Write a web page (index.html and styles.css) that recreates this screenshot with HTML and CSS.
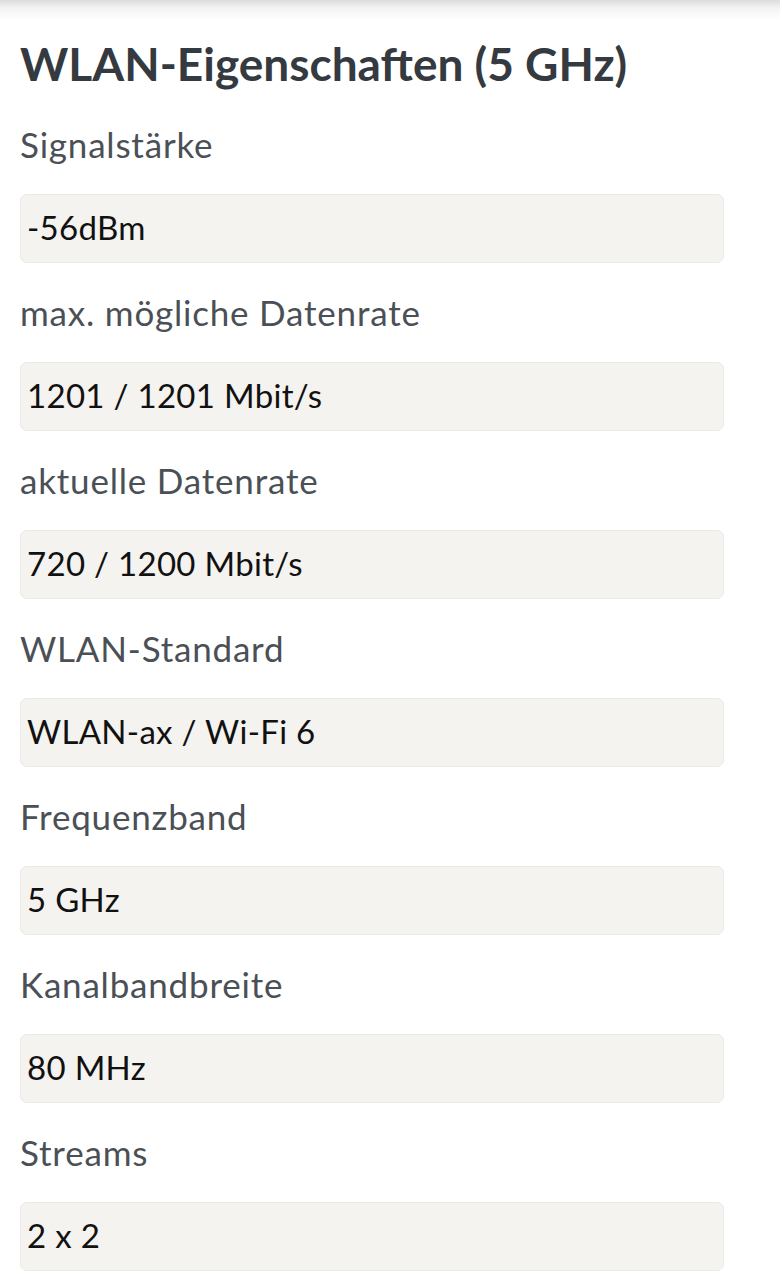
FILE: index.html
```html
<!DOCTYPE html>
<html>

	<head>
		<meta charset="UTF-8">
		<title>WLAN-Eigenschaften</title>
		<link rel="stylesheet" href="styles.css">
	</head>

	<body>
		<div class="topbar"></div>
		<div class="content">
			<h1 class="title">WLAN-Eigenschaften (5 GHz)</h1>
			<div class="field">
				<div class="label">Signalstärke</div>
				<div class="value">-56dBm</div>
			</div>
			<div class="field">
				<div class="label">max. mögliche Datenrate</div>
				<div class="value">1201 / 1201 Mbit/s</div>
			</div>
			<div class="field">
				<div class="label">aktuelle Datenrate</div>
				<div class="value">720 / 1200 Mbit/s</div>
			</div>
			<div class="field">
				<div class="label">WLAN-Standard</div>
				<div class="value">WLAN-ax / Wi-Fi 6</div>
			</div>
			<div class="field">
				<div class="label">Frequenzband</div>
				<div class="value">5 GHz</div>
			</div>
			<div class="field">
				<div class="label">Kanalbandbreite</div>
				<div class="value">80 MHz</div>
			</div>
			<div class="field">
				<div class="label">Streams</div>
				<div class="value">2 x 2</div>
			</div>
		</div>
	</body>

</html>
```

FILE: styles.css
```css
* {
	margin: 0;
	padding: 0;
	box-sizing: border-box;
}

body {
	background-color: #fff;
	font-family: Lato, "Liberation Sans", sans-serif;
	overflow: hidden;
}

/* Schatten der Kopfleiste oben */
.topbar {
	height: 20px;
	background: linear-gradient(#dcdcdc, #f3f3f3 40%, #fff);
}

.content {
	padding: 0 56px 0 20px;
}

.title {
	margin-top: 16px;
	font-size: 46px;
	line-height: 56px;
	font-weight: 700;
	color: #343a40;
	white-space: nowrap;
}

.field {
	padding-top: 28px;
}

.field + .field {
	padding-top: 25px;
}

.label {
	font-size: 35px;
	line-height: 48px;
	letter-spacing: 0.8px;
	color: #4a5056;
}

.value {
	margin-top: 26px;
	height: 69px;
	padding: 0 6px 4px;
	display: flex;
	align-items: center;
	background-color: #f4f3f0;
	border: 1px solid #ebeae6;
	border-radius: 7px;
	font-size: 33px;
	letter-spacing: 0.3px;
	color: #111;
}
```
